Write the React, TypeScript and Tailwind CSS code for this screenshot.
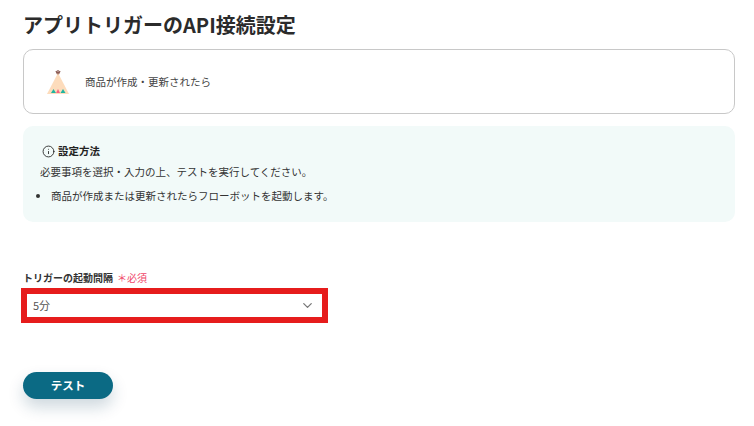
import React from 'react';
import { ChevronDown, Info } from 'lucide-react';

const font = "font-['Noto_Sans_CJK_JP','Noto_Sans',sans-serif]";

const TeepeeIcon: React.FC = () => (
	<svg width="24" height="26" viewBox="0 0 24 26">
		<path d="M10 2 L12 6 L14 2 M12 1 V6" stroke="#8a5a52" strokeWidth="1.3" fill="none" />
		<path d="M12 4 L23 25 H1 Z" fill="#fddcbc" />
		<path d="M5 24 L7.5 20 L10 24 Z" fill="#1fb5a0" />
		<path d="M10 24 L12 20 L14 24 Z" fill="#f8647f" />
		<path d="M14.5 24 L17 20 L19.5 24 Z" fill="#1fb5a0" />
	</svg>
);

const App: React.FC = () => {
	return (
		<div className={`${font} w-[754px] h-[426px] bg-white overflow-hidden px-[23px] text-[#333]`}>
			<h1 className="w-[712px] pt-[10px] h-[49px] text-[20px] leading-[30px] font-bold text-[#2b2b2b]">
				アプリトリガーのAPI接続設定
			</h1>

			<div className="w-[712px] h-[65px] flex items-center gap-[15px] pl-[22px] border border-[#c8c8c8] rounded-[10px]">
				<TeepeeIcon />
				<span className="text-[10.5px] text-[#444]">商品が作成・更新されたら</span>
			</div>

			<div className="w-[712px] h-[96px] mt-[12px] pt-[17px] pl-[13px] bg-[#f2faf9] rounded-[10px] text-[10.5px]">
				<div className="flex items-center gap-[3px] pl-[6px] h-[16px]">
					<Info size={13} strokeWidth={1.6} className="text-[#222]" />
					<span className="font-bold text-[#222]">設定方法</span>
				</div>
				<p className="mt-[5px] leading-[16px] pl-[4px]">必要事項を選択・入力の上、テストを実行してください。</p>
				<ul className="mt-[8px] leading-[16px] list-disc pl-[15px]">
					<li>商品が作成または更新されたらフローボットを起動します。</li>
				</ul>
			</div>

			<div className="mt-[47px] flex items-center h-[16px] text-[10px]">
				<span className="font-bold text-[#333]">トリガーの起動間隔</span>
				<span className="ml-[4px] text-[#f0476a]">＊必須</span>
			</div>

			<div className="-ml-[2px] mt-[3px] w-[307px] h-[35px] border-[6px] border-[#e61c1c] flex items-center justify-between pl-[6px] pr-[7px] bg-white">
				<span className="text-[11px] text-[#555]">5分</span>
				<ChevronDown size={15} strokeWidth={2} className="text-[#777]" />
			</div>

			<button className="mt-[49px] w-[90px] h-[27px] rounded-full bg-[#0b6a84] text-white text-[11.5px] font-bold shadow-[0_8px_16px_rgba(11,60,90,0.2)]">
				テスト
			</button>
		</div>
	);
};

export default App;
